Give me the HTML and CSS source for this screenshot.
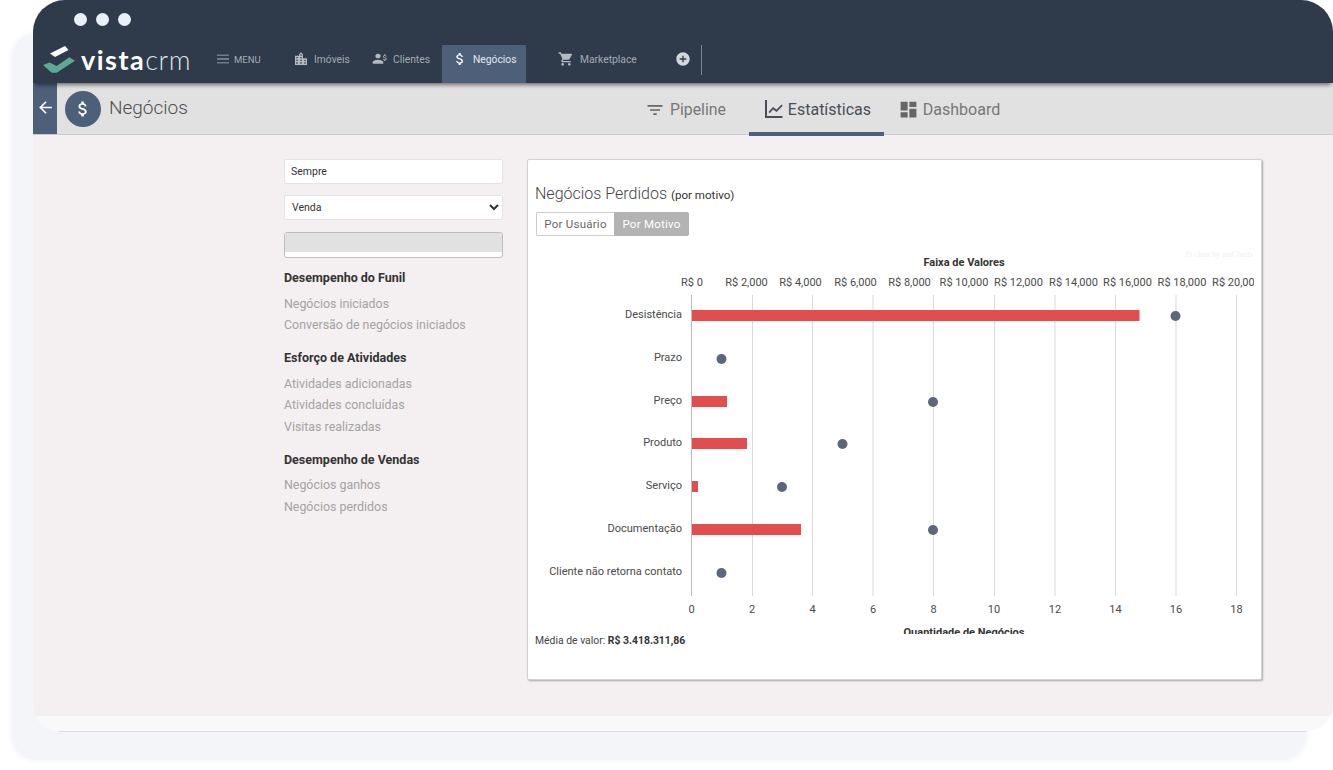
FILE: index.html
```html
<!DOCTYPE html>
<html lang="en">
<head>
    <meta charset="UTF-8">
    <meta name="viewport" content="width=device-width, initial-scale=1.0">
    <title>Negócios</title>
    <link rel="stylesheet" href="styles.css">
</head>
<body>
    <div class="backdrop"></div>
    <div class="window">
        <div class="titlebar">
            <span class="dot"></span><span class="dot"></span><span class="dot"></span>
        </div>

        <nav class="nav">
            <div class="logo">
                <svg class="logo-mark" viewBox="0 0 33 29">
                    <path class="mark-top" d="M7 8.500L22 1l3.500 4L12 12z"/>
                    <path class="mark-low" d="M0 20l6.500-2.500 7.200 3.500 12.600-8.700 5.700 3.400-18.300 12h-5z"/>
                </svg>
                <span class="logo-bold">vista</span><span class="logo-thin">crm</span>
            </div>
            <a class="nav-item nav-menu">
                <svg class="ico" viewBox="0 0 24 24"><path d="M3 18.500h18v-1.200H3zm0-5.900h18v-1.200H3zM3 5.500v1.200h18V5.500z"/></svg>MENU
            </a>
            <a class="nav-item nav-imoveis">
                <svg class="ico" viewBox="0 0 24 24"><path d="M15 11V5l-3-3-3 3v2H3v14h18V11h-6zm-8 8H5v-2h2v2zm0-4H5v-2h2v2zm0-4H5V9h2v2zm6 8h-2v-2h2v2zm0-4h-2v-2h2v2zm0-4h-2V9h2v2zm0-4h-2V5h2v2zm6 12h-2v-2h2v2zm0-4h-2v-2h2v2z"/></svg>Imóveis
            </a>
            <a class="nav-item nav-clientes">
                <svg class="ico" viewBox="0 0 24 24"><path d="M9 11c2.200 0 4-1.600 4-3.600S11.200 4 9 4 5 5.600 5 7.400 6.800 11 9 11zm0 2c-2.700 0-8 1.300-8 4v2h16v-2c0-2.700-5.300-4-8-4z"/><path d="M19.500 9.600c-1.400-.4-1.900-.7-1.900-1.300 0-.6.600-1 1.500-1s1.400.5 1.500 1.200h1.300c-.1-1-.7-1.900-1.900-2.200V5h-1.600v1.200c-1.100.3-2 1-2 2.100 0 1.400 1.100 2 2.700 2.400 1.400.3 1.700.8 1.700 1.300s-.3 1-1.500 1-1.600-.5-1.700-1.200h-1.300c.1 1.300 1 2 2.100 2.200V15h1.600v-1c1.100-.3 2-.9 2-2.100 0-1.500-1.300-2-2.500-2.300z"/></svg>Clientes
            </a>
            <a class="nav-item nav-active">
                <svg class="ico" viewBox="0 0 24 24"><path d="M11.800 10.900c-2.270-.59-3-1.200-3-2.150 0-1.090 1.010-1.850 2.700-1.850 1.780 0 2.440.85 2.500 2.100h2.210c-.07-1.720-1.120-3.300-3.210-3.810V3h-3v2.160c-1.940.42-3.500 1.680-3.500 3.610 0 2.310 1.910 3.460 4.700 4.130 2.500.6 3 1.480 3 2.410 0 .69-.49 1.790-2.700 1.790-2.060 0-2.870-.92-2.980-2.100h-2.200c.12 2.190 1.760 3.420 3.680 3.830V21h3v-2.150c1.950-.37 3.500-1.500 3.500-3.550 0-2.840-2.430-3.810-4.700-4.400z"/></svg>Negócios
            </a>
            <a class="nav-item nav-market">
                <svg class="ico" viewBox="0 0 24 24"><path d="M7 18c-1.100 0-1.990.9-1.990 2S5.900 22 7 22s2-.9 2-2-.9-2-2-2zM1 2v2h2l3.600 7.590-1.350 2.450c-.16.28-.25.61-.25.96 0 1.100.9 2 2 2h12v-2H7.420c-.14 0-.25-.11-.25-.25l.03-.12.9-1.630h7.450c.75 0 1.410-.41 1.750-1.030l3.580-6.490c.08-.14.12-.31.12-.48 0-.55-.45-1-1-1H5.210l-.94-2H1zm16 16c-1.100 0-1.990.9-1.990 2s.89 2 1.990 2 2-.9 2-2-.9-2-2-2z"/></svg>Marketplace
            </a>
            <svg class="ico ico-add" viewBox="0 0 24 24"><path d="M12 2C6.480 2 2 6.480 2 12s4.480 10 10 10 10-4.480 10-10S17.520 2 12 2zm5 11h-4v4h-2v-4H7v-2h4V7h2v4h4v2z"/></svg>
            <span class="nav-divider"></span>
        </nav>

        <header class="subheader">
            <a class="back">
                <svg viewBox="0 0 24 24"><path d="M20 11H7.830l5.590-5.590L12 4l-8 8 8 8 1.410-1.410L7.830 13H20v-2z"/></svg>
            </a>
            <span class="page-icon">
                <svg viewBox="0 0 24 24"><path d="M11.800 10.900c-2.270-.59-3-1.200-3-2.150 0-1.090 1.010-1.850 2.700-1.850 1.780 0 2.440.85 2.500 2.100h2.210c-.07-1.720-1.120-3.300-3.210-3.810V3h-3v2.160c-1.940.42-3.500 1.680-3.500 3.610 0 2.310 1.910 3.460 4.700 4.130 2.500.6 3 1.480 3 2.410 0 .69-.49 1.790-2.700 1.790-2.060 0-2.870-.92-2.980-2.100h-2.200c.12 2.190 1.760 3.420 3.680 3.830V21h3v-2.150c1.950-.37 3.500-1.500 3.500-3.550 0-2.840-2.430-3.810-4.700-4.400z"/></svg>
            </span>
            <h1 class="page-title">Negócios</h1>
            <div class="tabs">
                <a class="tab tab-pipeline">
                    <svg viewBox="0 0 24 24"><path d="M10 18h4v-2h-4v2zM3 6v2h18V6H3zm3 7h12v-2H6v2z"/></svg>Pipeline
                </a>
                <a class="tab tab-active">
                    <svg viewBox="0 0 20 20"><path d="M0 0h2v16h15.500v2H0z"/><path d="M3.500 12l4.500-5 3.500 2.500 5-5 1.300 1.300-6.200 6.100L8.100 9.400l-3.300 3.800z"/></svg>Estatísticas
                </a>
                <a class="tab tab-dash">
                    <svg viewBox="0 0 24 24"><path d="M3 13h8V3H3v10zm0 8h8v-6H3v6zm10 0h8V11h-8v10zm0-18v6h8V3h-8z"/></svg>Dashboard
                </a>
            </div>
        </header>

        <main class="content">
            <aside class="sidebar">
                <input class="field" type="text" value="Sempre">
                <select class="field field-select">
                    <option>Venda</option>
                </select>
                <div class="loading-box"><div class="loading-fill"></div></div>

                <h3 class="side-title">Desempenho do Funil</h3>
                <a class="side-link">Negócios iniciados</a>
                <a class="side-link">Conversão de negócios iniciados</a>

                <h3 class="side-title">Esforço de Atividades</h3>
                <a class="side-link">Atividades adicionadas</a>
                <a class="side-link">Atividades concluídas</a>
                <a class="side-link">Visitas realizadas</a>

                <h3 class="side-title">Desempenho de Vendas</h3>
                <a class="side-link">Negócios ganhos</a>
                <a class="side-link">Negócios perdidos</a>
            </aside>

            <section class="card">
                <h2 class="card-title">Negócios Perdidos <small>(por motivo)</small></h2>
                <div class="btn-group">
                    <button class="btn">Por Usuário</button>
                    <button class="btn btn-on">Por Motivo</button>
                </div>

                <!-- viewBox uses the page coordinates of the chart area -->
                <svg class="chart" viewBox="535 245 719 389">
                    <text class="credit" x="1253" y="257" text-anchor="end">JS chart by amCharts</text>
                    <text class="axis-title" x="964" y="266" text-anchor="middle">Faixa de Valores</text>

                    <g class="top-ticks" text-anchor="middle">
                        <text x="692" y="286">R$ 0</text>
                        <text x="746.500" y="286">R$ 2,000</text>
                        <text x="800.500" y="286">R$ 4,000</text>
                        <text x="855.500" y="286">R$ 6,000</text>
                        <text x="909.500" y="286">R$ 8,000</text>
                        <text x="964" y="286">R$ 10,000</text>
                        <text x="1018.500" y="286">R$ 12,000</text>
                        <text x="1073.500" y="286">R$ 14,000</text>
                        <text x="1127.500" y="286">R$ 16,000</text>
                        <text x="1182" y="286">R$ 18,000</text>
                        <text x="1236.500" y="286">R$ 20,000</text>
                    </g>

                    <g class="grid">
                        <line x1="752.500" x2="752.500" y1="295" y2="596"/>
                        <line x1="812.500" x2="812.500" y1="295" y2="596"/>
                        <line x1="873" x2="873" y1="295" y2="596"/>
                        <line x1="933.500" x2="933.500" y1="295" y2="596"/>
                        <line x1="994.500" x2="994.500" y1="295" y2="596"/>
                        <line x1="1055" x2="1055" y1="295" y2="596"/>
                        <line x1="1115.500" x2="1115.500" y1="295" y2="596"/>
                        <line x1="1176" x2="1176" y1="295" y2="596"/>
                        <line x1="1236.500" x2="1236.500" y1="295" y2="596"/>
                    </g>
                    <line class="axis-line" x1="691.500" x2="691.500" y1="295" y2="596"/>

                    <g class="labels" text-anchor="end">
                        <text x="682" y="318">Desistência</text>
                        <text x="682" y="361">Prazo</text>
                        <text x="682" y="404">Preço</text>
                        <text x="682" y="446">Produto</text>
                        <text x="682" y="489">Serviço</text>
                        <text x="682" y="532">Documentação</text>
                        <text x="682" y="575">Cliente não retorna contato</text>
                    </g>

                    <g class="bars">
                        <rect x="692" y="310" width="447.500" height="11"/>
                        <rect x="692" y="396" width="35" height="11"/>
                        <rect x="692" y="438" width="55" height="11"/>
                        <rect x="692" y="481" width="6" height="11"/>
                        <rect x="692" y="524" width="109" height="11"/>
                    </g>

                    <g class="dots">
                        <circle cx="1175.500" cy="316" r="5"/>
                        <circle cx="721.500" cy="359" r="5"/>
                        <circle cx="933" cy="402" r="5"/>
                        <circle cx="842.500" cy="444" r="5"/>
                        <circle cx="782" cy="487" r="5"/>
                        <circle cx="933" cy="530" r="5"/>
                        <circle cx="721.500" cy="573" r="5"/>
                    </g>

                    <g class="bottom-ticks" text-anchor="middle">
                        <text x="691.500" y="613">0</text>
                        <text x="752" y="613">2</text>
                        <text x="812.500" y="613">4</text>
                        <text x="873" y="613">6</text>
                        <text x="933.500" y="613">8</text>
                        <text x="994" y="613">10</text>
                        <text x="1055" y="613">12</text>
                        <text x="1115.500" y="613">14</text>
                        <text x="1176" y="613">16</text>
                        <text x="1236.500" y="613">18</text>
                    </g>
                    <text class="axis-title" x="964" y="636" text-anchor="middle">Quantidade de Negócios</text>
                </svg>

                <p class="avg">Média de valor: <strong>R$ 3.418.311,86</strong></p>
            </section>
        </main>

        <footer class="window-foot"></footer>
    </div>
</body>
</html>
```

FILE: styles.css
```css
* {
    box-sizing: border-box;
}
html, body {
    height: 770px;
    overflow: hidden;
}
body {
    margin: 0;
    background-color: #fff;
    font-family: Roboto, "Liberation Sans", sans-serif;
    color: #333;
}
a {
    text-decoration: none;
}

/* window on the white page */
.backdrop {
    position: absolute;
    left: 12px;
    top: 34px;
    width: 1294px;
    height: 726px;
    background-color: #f3f5f8;
    border-radius: 24px;
    box-shadow: 0 0 5px 2px #f6f7fa;
}
.backdrop::after {
    content: "";
    position: absolute;
    left: 47px;
    top: 697px;
    width: 1248px;
    height: 1px;
    background-color: #dcdde2;
}
.window {
    position: relative;
    margin-left: 33px;
    width: 1300px;
    height: 731px;
    display: flex;
    flex-direction: column;
    background-color: #f9f9f9;
    border-radius: 32px 32px 26px 26px;
    overflow: hidden;
}
.window-foot {
    height: 15px;
    background-color: #f9f9f9;
}

.titlebar {
    height: 45px;
    flex: none;
    display: flex;
    gap: 9px;
    padding: 13px 0 0 41px;
    background-color: #2f3a4a;
}
.dot {
    width: 13px;
    height: 13px;
    border-radius: 50%;
    background-color: #e9f0f8;
}

/* top nav */
.nav {
    position: relative;
    z-index: 2;
    height: 38px;
    flex: none;
    display: flex;
    align-items: center;
    background-color: #2f3a4a;
    box-shadow: 0 4px 4px -2px rgba(0, 0, 0, .5);
}
.logo {
    display: flex;
    align-items: center;
    width: 182px;
    height: 38px;
    padding: 0 0 9px 10px;
}
.logo-mark {
    width: 33px;
    height: 29px;
    margin-right: 5px;
}
.mark-top {
    fill: #fff;
}
.mark-low {
    fill: #5fa894;
}
.logo-bold {
    font-family: Lato, sans-serif;
    font-weight: 700;
    font-size: 27px;
    letter-spacing: 1.500px;
    color: #fff;
}
.logo-thin {
    font-family: Lato, sans-serif;
    font-weight: 300;
    font-size: 27px;
    letter-spacing: .6px;
    color: #dfe3e8;
}
.nav-item {
    display: flex;
    align-items: center;
    height: 38px;
    padding-bottom: 10px;
    font-size: 10.300px;
    color: #a4abb5;
}
.ico {
    width: 16px;
    height: 16px;
    flex: none;
    margin-right: 5px;
    fill: #b4bac3;
}
.nav-menu {
    width: 78px;
    font-size: 9.500px;
}
.nav-menu .ico {
    margin-right: 3px;
}
.nav-imoveis {
    width: 79px;
}
.nav-clientes {
    width: 70px;
}
.nav-active {
    width: 84px;
    padding-left: 10px;
    margin-right: 32px;
    background-color: #4e5f7a;
    color: #e3e7ec;
}
.nav-active .ico {
    fill: #fff;
}
.nav-market {
    width: 117px;
}
.nav-market .ico {
    margin-right: 6px;
}
.ico-add {
    margin: 0 10px 10px 0;
    fill: #d4d8dd;
}
.nav-divider {
    width: 1px;
    height: 30px;
    margin-bottom: 8px;
    background-color: #7d8693;
}

/* page header with tabs */
.subheader {
    position: relative;
    z-index: 1;
    height: 52px;
    flex: none;
    display: flex;
    align-items: stretch;
    background-color: #e1e1e1;
    border-bottom: 1px solid #ccc;
}
.back {
    width: 24px;
    display: flex;
    align-items: center;
    justify-content: center;
    background-color: #4e5f7a;
}
.back svg {
    width: 19px;
    height: 19px;
    margin-bottom: 3px;
    fill: #fff;
}
.page-icon {
    width: 36px;
    height: 36px;
    margin: 8px 0 0 8px;
    display: flex;
    align-items: center;
    justify-content: center;
    border-radius: 50%;
    background-color: #4e5f7a;
}
.page-icon svg {
    width: 20px;
    height: 20px;
    fill: #fff;
}
.page-title {
    margin: 13px 0 0 8px;
    width: 520px;
    font-size: 19px;
    line-height: 24px;
    font-weight: 300;
    color: #4d4d4d;
}
.tabs {
    display: flex;
    height: 53px;
}
.tab {
    display: flex;
    align-items: center;
    padding: 4px 16px 0;
    font-size: 16px;
    color: #777;
    border-bottom: 4px solid transparent;
}
.tab svg {
    width: 20px;
    height: 20px;
    flex: none;
    margin-right: 5px;
    fill: #666;
}
.tab-pipeline {
    padding-right: 23px;
    font-size: 15.800px;
}
.tab-active {
    width: 135px;
    padding-right: 0;
    color: #4a4f57;
    border-bottom-color: #4e5f7a;
}
.tab-active svg {
    margin-right: 3px;
    fill: #4a4f57;
}
.tab-dash {
    padding-left: 14px;
}
.tab-dash svg {
    width: 21px;
    height: 21px;
    margin-right: 4px;
}

/* content */
.content {
    flex: 1;
    display: flex;
    gap: 24px;
    padding: 24px 0 0 251px;
    background-color: #f4f0f1;
}
.sidebar {
    width: 219px;
    display: flex;
    flex-direction: column;
}
.field {
    display: block;
    width: 219px;
    height: 25px;
    padding: 0 6px;
    margin-bottom: 11px;
    font-family: Roboto, sans-serif;
    font-size: 10.500px;
    color: #333;
    background-color: #fff;
    border: 1px solid #e6e3e4;
    border-radius: 2px;
    outline: none;
}
.field-select {
    padding: 0 3px;
    margin-bottom: 12px;
}
.loading-box {
    height: 26px;
    background-color: #fff;
    border: 1px solid #bdbdbd;
    border-radius: 3px;
    overflow: hidden;
}
.loading-fill {
    height: 19px;
    background-color: #e1e1e1;
}
.side-title {
    margin: 12px 0 6.500px;
    font-size: 12.500px;
    line-height: 16px;
    font-weight: 700;
    color: #333;
}
.side-link {
    font-size: 12.400px;
    line-height: 21.500px;
    color: #a3a3a3;
}
.side-link + .side-title {
    margin-top: 14.500px;
}

/* chart card */
.card {
    width: 735px;
    height: 521px;
    padding: 0 7px;
    background-color: #fff;
    border: 1px solid #d2d2d2;
    border-radius: 2px;
    box-shadow: 1px 1px 2px rgba(0, 0, 0, .3);
}
.card-title {
    margin: 24px 0 7px;
    font-size: 16px;
    line-height: 20px;
    font-weight: 300;
    color: #444;
}
.card-title small {
    font-size: 11.600px;
    font-weight: 400;
    color: #333;
}
.btn-group {
    display: flex;
    width: 153px;
    margin-left: 1px;
}
.btn {
    width: 78px;
    height: 24px;
    padding: 0;
    font-family: Roboto, sans-serif;
    font-size: 11.500px;
    letter-spacing: .25px;
    color: #666;
    background-color: #fff;
    border: 1px solid #ccc;
    border-right: 0;
    border-radius: 2px 0 0 2px;
}
.btn-on {
    width: 75px;
    color: #fff;
    background-color: #b3b3b3;
    border: 1px solid #b3b3b3;
    border-radius: 0 2px 2px 0;
}
.chart {
    display: block;
    width: 719px;
    height: 389px;
    margin-top: 9px;
    overflow: hidden;
}
.chart text {
    font-family: Roboto, sans-serif;
    font-size: 11px;
    fill: #4a4a4a;
}
.chart .axis-title {
    font-size: 11px;
    font-weight: 700;
    fill: #333;
}
.chart .credit {
    font-family: "Liberation Serif", serif;
    font-size: 8px;
    fill: #f0f0f0;
}
.grid line {
    stroke: #d9d9d9;
    stroke-width: 1;
}
.axis-line {
    stroke: #bbb;
    stroke-width: 1;
}
.bars rect {
    fill: #e24e50;
}
.dots circle {
    fill: #5c677d;
}
.avg {
    margin: 1px 0 0;
    font-size: 10.400px;
    line-height: 12px;
    color: #444;
}
.avg strong {
    color: #333;
}
```
